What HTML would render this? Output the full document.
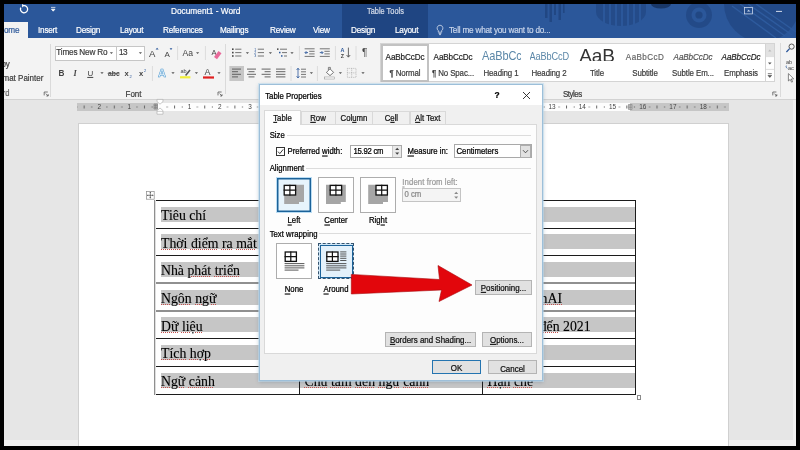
<!DOCTYPE html>
<html><head><meta charset="utf-8">
<style>
*{margin:0;padding:0;box-sizing:border-box}
html,body{width:800px;height:450px;overflow:hidden;background:#000}
body{position:relative;font-family:"Liberation Sans",sans-serif;color:#222}
.a{position:absolute}
.t{position:absolute;white-space:nowrap;line-height:1}
#app{left:4px;top:4px;width:792px;height:442px;background:#e6e6e6;overflow:hidden;will-change:transform}
#title{left:0;top:0;width:792px;height:34px;background:#2b579a;overflow:hidden}
#tt{left:338px;top:0;width:86px;height:34px;background:#1f4582}
.tab{color:#fff;font-size:8.2px;top:22.7px;letter-spacing:-.22px}
#ribbon{left:0;top:34px;width:792px;height:61.5px;background:#f3f3f3;border-bottom:1px solid #d2d2d2}
.rl{font-size:7.6px;color:#3a3a3a}
.sep{position:absolute;width:1px;background:#dadada;top:6px;height:50px}
.sty{position:absolute;top:0;width:48px;height:38px}
.sty .p{position:absolute;left:0;width:48px;text-align:center;top:10.2px;font-size:8.1px;letter-spacing:-.1px;color:#222;line-height:1;white-space:nowrap;overflow:hidden}
.sty .n{position:absolute;left:0;width:48px;text-align:center;top:26.6px;font-size:7.9px;letter-spacing:-.1px;color:#3a3a3a;line-height:1;white-space:nowrap}
#page{left:74.2px;top:118.8px;width:650.4px;height:330px;background:#fff;border:1px solid #d0d0d0;border-bottom:none}
.hl{position:absolute;background:#c6c6c6;height:15px}
.ct{position:absolute;font-family:"Liberation Serif",serif;font-size:13.8px;line-height:1;white-space:nowrap;color:#000;margin-top:1.5px;-webkit-text-stroke:.12px #000}
.ct i{font-style:normal;text-decoration:underline dotted #c4504c 1px;text-underline-offset:1.2px}
#dlg{left:255px;top:80px;width:284px;height:297px;background:#f0f0f0;border:1px solid #9dbfd9;box-shadow:0 0 0 1px rgba(190,220,240,.55),0 1px 4px rgba(40,70,100,.3)}
#dlg .t,.btn,.dtab{-webkit-text-stroke:.22px currentColor}
#dlg .t{font-size:7.75px;color:#000}
.btn{position:absolute;border:1px solid #b4b4b4;background:#e1e1e1;font-size:7.95px;text-align:center;color:#111;white-space:nowrap}
.dtab{position:absolute;top:26px;height:13px;border:1px solid #d9d9d9;border-bottom:none;background:#f0f0f0;font-size:7.75px;text-align:center;line-height:12.4px;color:#111}
.box{position:absolute;width:36px;height:36px;background:#fff;border:1px solid #adadad}
u{text-decoration:underline;text-underline-offset:1px;text-decoration-thickness:.6px}
.hline{position:absolute;height:1px;background:#dcdcdc}
.tab,.rl,.sty .n,.ttl{transform:scaleY(1.1);transform-origin:50% 55%}
#dlg .t{transform:translateY(.2px) scaleY(1.1);transform-origin:50% 55%}
.sty .p{transform:scaleY(1.16);transform-origin:50% 60%}
.tab,.ttl,.sty .p,.sty .n,.rl{-webkit-text-stroke:.18px currentColor}
.s{display:inline-block;transform:translateY(.6px) scaleY(1.1);transform-origin:50% 55%}
</style></head><body>
<div id="app" class="a">
 <div id="title" class="a">
<svg class="a" style="left:0;top:0" width="792" height="34"><g transform="translate(-4,-4)" fill="#20457f" opacity=".85">
   <rect x="545" y="4" width="2.5" height="14"/><rect x="549.5" y="4" width="2.5" height="18"/><rect x="554" y="4" width="2" height="11"/><rect x="558.5" y="4" width="2.5" height="16"/><rect x="563" y="4" width="1.6" height="9"/>
   <path d="M596 4H646V12A25 14 0 0 1 596 12Z" opacity=".7"/>
   <g fill="#2b579a"><rect x="603" y="4" width="2" height="22"/><rect x="609" y="4" width="2" height="24"/><rect x="615" y="4" width="2" height="24"/><rect x="621" y="4" width="2" height="24"/><rect x="627" y="4" width="2" height="24"/><rect x="633" y="4" width="2" height="22"/><rect x="639" y="4" width="2" height="18"/></g>
   <ellipse cx="661" cy="4" rx="10" ry="4.5" fill="#16325f"/><circle cx="699" cy="15" r="13" opacity=".8"/><circle cx="699" cy="15" r="7.5" fill="#2b579a"/><circle cx="699" cy="15" r="3.6"/>
   <circle cx="762" cy="4" r="38" opacity=".8"/>
   <g stroke="#2f5c9f" stroke-width="1.4" fill="none"><path d="M740 4L785 36M748 4L792 35M756 4L796 32M732 6L776 38"/></g>
  </g></svg>
  <svg class="a" style="left:739px;top:2px" width="50" height="12"><rect x="1.5" y="1.5" width="8" height="6.4" fill="none" stroke="#c9d5ea" stroke-width="0.8"/><path d="M4 5.6l1.6-1.8l1.6 1.8z" fill="#c9d5ea"/><path d="M33 5.4h6" stroke="#e4eaf5" stroke-width="0.9"/></svg>
  <svg class="a" style="left:431px;top:20px" width="10" height="12"><path d="M5 1.2a3 3 0 0 1 1.7 5.4v1.6h-3.4v-1.6a3 3 0 0 1 1.7-5.4zM3.6 9.4h2.8M4 10.6h2" stroke="#d5deee" stroke-width="0.8" fill="none"/></svg>
  <svg class="a" style="left:12.6px;top:-.6px" width="50" height="14"><path d="M7 2.6a3.6 3.6 0 1 1-3.2 2" stroke="#fff" stroke-width="1.3" fill="none"/><path d="M5 1l2.6 1.6l-2.4 1.8z" fill="#fff"/><path d="M34 4.4h4.4M34.4 6.2h3.6l-1.8 2z" stroke="#fff" stroke-width="0.7" fill="#fff"/></svg>
  <div id="tt" class="a"></div>
  <div class="t ttl" style="left:167px;top:3px;color:#fff;font-size:8.3px">Document1 - Word</div>
  <div class="t ttl" style="left:363px;top:3.5px;color:#d5dcea;font-size:7.4px">Table Tools</div>
  <div class="a" style="left:0;top:18px;width:24px;height:16px;background:#f3f3f3"></div>
  <div class="t tab" style="left:0;color:#2b579a">ome</div>
  <div class="t tab" style="left:34px">Insert</div>
  <div class="t tab" style="left:72px">Design</div>
  <div class="t tab" style="left:116px">Layout</div>
  <div class="t tab" style="left:159px">References</div>
  <div class="t tab" style="left:216px">Mailings</div>
  <div class="t tab" style="left:266px">Review</div>
  <div class="t tab" style="left:309px">View</div>
  <div class="t tab" style="left:347px">Design</div>
  <div class="t tab" style="left:391px">Layout</div>
  <div class="t tab" style="left:445px;color:#c9d5ea">Tell me what you want to do...</div>
 </div>
 <div id="ribbon" class="a">
  <div class="t rl" style="left:-2.6px;top:22.5px;font-size:8px">py</div>
  <div class="t rl" style="left:-1.5px;top:37px;font-size:8px">mat Painter</div>
  <div class="t rl" style="left:-1.3px;top:52px;color:#666">rd</div>
  <div class="sep" style="left:45.8px;height:53px"></div>
  <div class="a" style="left:50.5px;top:7.5px;width:62px;height:15px;background:#fff;border:1px solid #c6c6c6"></div>
  <div class="a" style="left:112px;top:7.5px;width:29px;height:15px;background:#fff;border:1px solid #c6c6c6"></div>
  <div class="t rl" style="left:52.3px;top:11.3px;font-size:8.2px;letter-spacing:-.2px">Times New Ro</div>
  <div class="t rl" style="left:115px;top:11.3px;font-size:8.2px;letter-spacing:-.6px">13</div>
  <div class="t rl" style="left:121.5px;top:52.8px;font-size:8px">Font</div>
  <div class="sep" style="left:221px"></div>
  <div class="t rl" style="left:559px;top:52.8px;font-size:8px;letter-spacing:-.5px">Styles</div>
  <div class="sep" style="left:776.4px;top:4.5px;height:54px"></div>
  <div class="a" style="left:761.4px;top:4.5px;width:9.6px;height:39px;background:#fff;border:1px solid #d4d4d4"></div>
  <div class="a" style="left:762.4px;top:5.5px;width:7.6px;height:12.6px;background:#e2e2e2"></div>
  <svg class="a" style="left:761.4px;top:4.5px" width="9.6" height="39"><path d="M3.2 8.4l1.6-1.8l1.6 1.8z" fill="#bbb"/><path d="M0 13.6h9.6M0 26.4h9.6" stroke="#d4d4d4" stroke-width="0.8"/><path d="M3 19.6h3.6l-1.8 2z" fill="#555"/><path d="M2.8 30.6h4M3 32.4h3.6l-1.8 2z" fill="#555" stroke="#555" stroke-width="0.7"/></svg>
  <svg class="a" style="left:780px;top:4px" width="12" height="42"><circle cx="7.6" cy="4.6" r="2.6" fill="none" stroke="#555" stroke-width="1"/><path d="M5.6 6.6L2.4 10" stroke="#2b579a" stroke-width="1.3"/><text x="2" y="22" font-size="5.6" font-family="Liberation Sans, sans-serif" fill="#444">ab</text><text x="4" y="28" font-size="5.6" font-family="Liberation Sans, sans-serif" fill="#444">ac</text><path d="M2.4 23.6q-1.4 1.6 1 2.8" stroke="#2b579a" stroke-width="0.7" fill="none"/><path d="M4.4 31.6v7.4l1.8-1.6l1.4 2.8l1-.5l-1.3-2.7l2.4-.2z" fill="#fff" stroke="#555" stroke-width="0.7"/></svg>
  <svg class="a" style="left:0;top:0" width="792" height="61" font-family="Liberation Sans, sans-serif"><g transform="translate(-4,-38)">
   <path d="M109.8 52.2h3.2l-1.6 1.8z" fill="#555"/>
   <path d="M138.8 52.2h3.2l-1.6 1.8z" fill="#555"/>
   <text x="149" y="57" font-size="9.6" fill="#444">A</text><path d="M155.6 49.6l1.5-1.8l1.5 1.8z" fill="#2b579a"/>
   <text x="164.6" y="57" font-size="8" fill="#444">A</text><path d="M169.6 48.2l1.4 1.7l1.4-1.7z" fill="#2b579a"/>
   <path d="M177.6 46V60M205.4 46V60M299.4 46V60M335.4 46V60M356 46V60M152.4 66V81M291 66V81M317.4 66V81" stroke="#dcdcdc" stroke-width="1" fill="none"/>
   <text x="182.6" y="56" font-size="8.6" fill="#444">Aa</text><path d="M196.0 52.2h3.2l-1.6 1.8z" fill="#555"/>
   <text x="211.4" y="55" font-size="7.5" fill="#444">A</text><path d="M214 57l4.5-6l3 2.2l-4.5 6z" fill="#e86a9a"/>
   <rect x="232" y="48.4" width="1.6" height="1.6" fill="#444"/><path d="M235.2 49.2H241.4" stroke="#666" stroke-width="0.9"/><rect x="232" y="51.8" width="1.6" height="1.6" fill="#444"/><path d="M235.2 52.6H241.4" stroke="#666" stroke-width="0.9"/><rect x="232" y="55.2" width="1.6" height="1.6" fill="#444"/><path d="M235.2 56.0H241.4" stroke="#666" stroke-width="0.9"/><path d="M245.8 52.2h3.2l-1.6 1.8z" fill="#555"/>
   <text x="254.2" y="50.5" font-size="3.6" fill="#2b579a">1</text><path d="M257.8 49.2H264.0" stroke="#666" stroke-width="0.9"/><text x="254.2" y="53.9" font-size="3.6" fill="#2b579a">2</text><path d="M257.8 52.6H264.0" stroke="#666" stroke-width="0.9"/><text x="254.2" y="57.3" font-size="3.6" fill="#2b579a">3</text><path d="M257.8 56.0H264.0" stroke="#666" stroke-width="0.9"/><path d="M268.8 52.2h3.2l-1.6 1.8z" fill="#555"/>
   <path d="M280 49.2H287M282 52.6H287M284 56H287" stroke="#666" stroke-width="0.9"/><rect x="277" y="48.4" width="1.5" height="1.5" fill="#444"/><rect x="279" y="51.8" width="1.5" height="1.5" fill="#2b579a"/><rect x="281" y="55.2" width="1.5" height="1.5" fill="#2b579a"/><path d="M290.4 52.2h3.2l-1.6 1.8z" fill="#555"/>
   <path d="M304.6 48.800000000000004H314.6M309.20000000000005 51.300000000000004H314.6M309.20000000000005 53.9H314.6M304.6 56.4H314.6" stroke="#666" stroke-width="0.9"/><path d="M308.0 52.6H305.20000000000005M306.40000000000003 51.2L305.0 52.6L306.40000000000003 54.0" stroke="#2b579a" stroke-width="0.9" fill="none"/><path d="M319.8 48.800000000000004H329.8M324.40000000000003 51.300000000000004H329.8M324.40000000000003 53.9H329.8M319.8 56.4H329.8" stroke="#666" stroke-width="0.9"/><path d="M319.8 52.6H322.8M321.6 51.2L323.0 52.6L321.6 54.0" stroke="#2b579a" stroke-width="0.9" fill="none"/>
   <text x="340.6" y="52" font-size="5.4" fill="#2b579a" font-weight="bold">A</text><text x="340.8" y="57.6" font-size="5.4" fill="#444" font-weight="bold">Z</text><path d="M348.4 47.6V57M346.6 55l1.8 2.2l1.8-2.2" stroke="#555" stroke-width="0.9" fill="none"/>
   <text x="362" y="56.4" font-size="10" fill="#444">¶</text>
   <text x="58.6" y="76" font-size="8.2" font-weight="bold" fill="#444">B</text>
   <text x="73.4" y="76" font-size="8.2" font-style="italic" font-weight="bold" font-family="Liberation Serif, serif" fill="#444">I</text>
   <text x="87.4" y="76" font-size="8" fill="#444" text-decoration="underline">U</text><path d="M87.4 77.4H93.2" stroke="#444" stroke-width="0.7"/><path d="M100.4 72.2h3.2l-1.6 1.8z" fill="#555"/>
   <text x="108" y="75.6" font-size="6.8" font-weight="bold" fill="#444">abc</text><path d="M107.6 73.4H119.4" stroke="#444" stroke-width="0.6"/>
   <text x="124.4" y="76" font-size="7.6" font-weight="bold" fill="#444">x</text><text x="129.4" y="77.6" font-size="4" fill="#2b579a">2</text>
   <text x="139" y="76" font-size="7.6" font-weight="bold" fill="#444">x</text><text x="144" y="72" font-size="4" fill="#2b579a">2</text>
   <text x="158" y="77" font-size="11" font-weight="bold" fill="#eef6fc" stroke="#4a98d0" stroke-width="0.55">A</text><path d="M171.4 72.2h3.2l-1.6 1.8z" fill="#555"/>
   <text x="180.4" y="72.6" font-size="5.6" fill="#444">ab</text><path d="M185 75l4.4-5.6l1.2 1l-4.4 5.6z" fill="#555"/><rect x="180" y="76.2" width="10.4" height="2.2" fill="#f2ee3a"/><path d="M194.8 72.2h3.2l-1.6 1.8z" fill="#555"/>
   <text x="204.6" y="75.4" font-size="9" fill="#444">A</text><rect x="203" y="76.4" width="11" height="2.2" fill="#e02020"/><path d="M217.4 72.2h3.2l-1.6 1.8z" fill="#555"/>
   <rect x="229.4" y="66" width="14.6" height="15" fill="#c6c6c6"/>
   <path d="M232.0 69.1h9M232.0 71.7h6M232.0 74.3h9M232.0 76.9h6" stroke="#555" stroke-width="0.9" fill="none"/><path d="M247.0 69.1h9M248.5 71.7h6M247.0 74.3h9M248.5 76.9h6" stroke="#555" stroke-width="0.9" fill="none"/><path d="M261.6 69.1h9M264.6 71.7h6M261.6 74.3h9M264.6 76.9h6" stroke="#555" stroke-width="0.9" fill="none"/><path d="M276.0 69.1h9.4M276.0 71.7h9.4M276.0 74.3h9.4M276.0 76.9h9.4" stroke="#555" stroke-width="0.9" fill="none"/>
   <path d="M301 69.2H306M301 71.8H306M301 74.4H306M301 77H306" stroke="#666" stroke-width="0.9"/><path d="M298 68.4V77.8M296.6 70l1.4-1.8l1.4 1.8M296.6 76.2l1.4 1.8l1.4-1.8" stroke="#2b579a" stroke-width="0.8" fill="none"/><path d="M309.8 72.2h3.2l-1.6 1.8z" fill="#555"/>
   <path d="M326.4 72.4l3.6-3.6l3.6 3.6l-3.6 3.2z" fill="#fff" stroke="#555" stroke-width="0.8"/><path d="M328.4 70V67.4h2V69" stroke="#555" stroke-width="0.7" fill="none"/><rect x="324.4" y="77" width="10.2" height="2" fill="#fff" stroke="#888" stroke-width="0.5"/><path d="M338.8 72.2h3.2l-1.6 1.8z" fill="#555"/>
   <path d="M347.4 68.4h8.6v9h-8.6zM351.7 68.4v9M347.4 72.9h8.6" stroke="#aaa" stroke-width="0.7" fill="none" stroke-dasharray="1 0.8"/><path d="M361.4 72.2h3.2l-1.6 1.8z" fill="#555"/>
   <path d="M44.2 95.4V92.0H47.8" stroke="#555" stroke-width="0.8" fill="none"/><path d="M45.8 93.6L48.2 96.0M48.2 94.2V96.0H46.4" stroke="#555" stroke-width="0.8" fill="none"/><path d="M218.0 95.4V92.0H221.6" stroke="#555" stroke-width="0.8" fill="none"/><path d="M219.6 93.6L222.0 96.0M222.0 94.2V96.0H220.2" stroke="#555" stroke-width="0.8" fill="none"/><path d="M772.8 95.4V92.0H776.4" stroke="#555" stroke-width="0.8" fill="none"/><path d="M774.4 93.6L776.8 96.0M776.8 94.2V96.0H775.0" stroke="#555" stroke-width="0.8" fill="none"/>
  </g></svg>
  <div class="a" id="gal" style="left:376px;top:4.5px;width:386px;height:39px;background:#fff;border:1px solid #d4d4d4">
   <div class="sty" style="left:0;border:2px solid #c2c2c2"><div class="p" style="left:-2px;top:8.2px">AaBbCcDc</div><div class="n" style="left:-2px;top:24.6px">¶ Normal</div></div>
   <div class="sty" style="left:48px"><div class="p">AaBbCcDc</div><div class="n">¶ No Spac...</div></div>
   <div class="sty" style="left:96px"><div class="p" style="font-size:11px;top:7.6px;color:#5b87a8;-webkit-text-stroke:0;text-align:left;left:5px;width:39px">AaBbCc</div><div class="n">Heading 1</div></div>
   <div class="sty" style="left:144px"><div class="p" style="font-size:9.2px;top:9.2px;color:#5b87a8;-webkit-text-stroke:0;text-align:left;left:4.5px;width:40px">AaBbCcD</div><div class="n">Heading 2</div></div>
   <div class="sty" style="left:192px"><div class="p" style="font-size:19px;top:2.3px;height:15.5px;transform:none;-webkit-text-stroke:0;color:#333">AaB</div><div class="n">Title</div></div>
   <div class="sty" style="left:240px"><div class="p" style="color:#666;letter-spacing:.4px">AaBbCcD</div><div class="n">Subtitle</div></div>
   <div class="sty" style="left:288px"><div class="p" style="font-style:italic;color:#555">AaBbCcDc</div><div class="n">Subtle Em...</div></div>
   <div class="sty" style="left:336px"><div class="p" style="font-style:italic">AaBbCcDc</div><div class="n">Emphasis</div></div>
  </div>
 </div>
 <div class="a" style="left:789px;top:96px;width:3px;height:346px;background:#f1f1f1"></div>
 <div class="a" style="left:0;top:436.4px;width:792px;height:6px;background:#f1f1f1"></div>
 <div id="page" class="a"></div>

 <!-- ruler -->
 <div class="a" id="ruler" style="left:73px;top:99px;width:652px;height:7.8px;background:#fdfdfd;overflow:hidden">
  <div class="a" style="left:0;top:0;width:80.5px;height:8px;background:#c6c6c6"></div>
  <div class="a" style="left:552.5px;top:0;width:100px;height:8px;background:#c6c6c6"></div>
  <svg class="a" style="left:0;top:0" width="652" height="8"><defs><pattern id="tk" x="82.5" y="0" width="30.15" height="8" patternUnits="userSpaceOnUse"><rect x="7.2" y="3.5" width="1" height="1" fill="#555"/><rect x="14.6" y="2.5" width="1" height="3" fill="#666"/><rect x="22.2" y="3.5" width="1" height="1" fill="#555"/></pattern></defs><rect width="652" height="8" fill="url(#tk)"/>
  <g font-family="Liberation Sans, sans-serif" font-size="6.4" fill="#444" text-anchor="middle"><text x="22.2" y="6.3">2</text><text x="52.3" y="6.3">1</text><text x="112.6" y="6.3">1</text><text x="142.8" y="6.3">2</text><text x="173" y="6.3">3</text><text x="475" y="6.3">13</text><text x="505.3" y="6.3">14</text><text x="535.5" y="6.3">15</text><text x="565.8" y="6.3">16</text><text x="595.9" y="6.3">17</text><text x="626.2" y="6.3">18</text></g></svg>
 </div>

 <svg class="a" style="left:146px;top:94px" width="20" height="20"><path d="M7 1.4h6v2.2l-3 2.6l-3-2.6z" fill="#fff" stroke="#b0b0b0" stroke-width="0.7"/><path d="M7 16.2v-3.6l3-2.6l3 2.6v3.6z" fill="#fff" stroke="#b0b0b0" stroke-width="0.7"/><path d="M7 13.4h6" stroke="#b0b0b0" stroke-width="0.6"/><path d="M4 6h3.4v5H4zM4 7.6h3.4M4 9.3h3.4M5.7 6v5" stroke="#777" stroke-width="0.6" fill="#bbb"/></svg>
 <svg class="a" style="left:624px;top:100px" width="6" height="6"><path d="M.4 .4h3.6v5H.4zM.4 2h3.6M.4 3.7h3.6M2.2 .4v5" stroke="#777" stroke-width="0.6" fill="#ddd"/></svg>
 <svg class="a" style="left:142px;top:187.4px" width="9" height="9"><rect x=".4" y=".4" width="7.8" height="7.8" fill="#fff" stroke="#8a8a8a" stroke-width="0.7"/><path d="M4.3 1.6v5.4M1.6 4.3h5.4" stroke="#333" stroke-width="0.6"/><path d="M4.3 1l.9 1.1h-1.8zM4.3 7.6l.9-1.1h-1.8zM1 4.3l1.1-.9v1.8zM7.6 4.3l-1.1-.9v1.8z" fill="#333"/></svg>
 <div class="a" style="left:632.6px;top:391.4px;width:4.6px;height:4.6px;background:#fff;border:.8px solid #8a8a8a"></div>
 <div id="tbl" class="a" style="left:150.5px;top:196.3px;width:482px;height:195px">
  <div class="hl" style="left:6px;top:6.4px;width:475px"></div>
  <div class="ct" style="left:6.5px;top:7.2px">Tiêu chí</div>
  <div class="hl" style="left:6px;top:34.1px;width:475px"></div>
  <div class="ct" style="left:6.5px;top:34.9px"><i>Thời</i> <i>điểm</i> <i>ra</i> <i>mắt</i></div>
  <div class="hl" style="left:6px;top:61.8px;width:475px"></div>
  <div class="ct" style="left:6.5px;top:62.6px">Nhà <i>phát</i> <i>triển</i></div>
  <div class="hl" style="left:6px;top:89.5px;width:475px"></div>
  <div class="ct" style="left:6.5px;top:90.3px"><i>Ngôn</i> <i>ngữ</i></div>
  <div class="ct" style="right:74.5px;top:90.3px"><i>OpenAI</i></div>
  <div class="hl" style="left:6px;top:117.2px;width:475px"></div>
  <div class="ct" style="left:6.5px;top:118.0px"><i>Dữ</i> <i>liệu</i></div>
  <div class="ct" style="right:45.9px;top:118.0px">Dữ liệu <i>đến</i> 2021</div>
  <div class="hl" style="left:6px;top:144.9px;width:475px"></div>
  <div class="ct" style="left:6.5px;top:145.7px"><i>Tích</i> <i>hợp</i></div>
  <div class="hl" style="left:6px;top:172.6px;width:475px"></div>
  <div class="ct" style="left:6.5px;top:173.4px"><i>Ngữ</i> <i>cảnh</i></div>
  <div class="ct" style="left:150px;top:173.4px"><i>Chú</i> <i>tâm</i> <i>đến</i> <i>ngữ</i> <i>cảnh</i></div>
  <div class="ct" style="left:333px;top:173.4px"><i>Hạn</i> <i>chế</i></div>
  <div class="a" style="left:0;top:-0.3px;width:481.6px;height:1px;background:#1c1c1c"></div>
  <div class="a" style="left:0;top:27.7px;width:481.6px;height:1px;background:#1c1c1c"></div>
  <div class="a" style="left:0;top:54.7px;width:481.6px;height:1px;background:#1c1c1c"></div>
  <div class="a" style="left:0;top:81.7px;width:481.6px;height:2px;background:#909090"></div>
  <div class="a" style="left:0;top:109.7px;width:481.6px;height:2px;background:#909090"></div>
  <div class="a" style="left:0;top:137.7px;width:481.6px;height:1px;background:#1c1c1c"></div>
  <div class="a" style="left:0;top:165.7px;width:481.6px;height:1px;background:#1c1c1c"></div>
  <div class="a" style="left:0;top:193.7px;width:481.6px;height:1px;background:#1c1c1c"></div>
  <div class="a" style="left:-.4px;top:0;width:2px;height:194.8px;background:linear-gradient(90deg,#8f8f8f 1px,#dedede 1px)"></div>
  <div class="a" style="left:144.5px;top:0;width:1.2px;height:194.8px;background:#1c1c1c"></div>
  <div class="a" style="left:327.6px;top:0;width:1.2px;height:194.8px;background:#1c1c1c"></div>
  <div class="a" style="left:480.6px;top:0;width:1.2px;height:194.8px;background:#1c1c1c"></div>
 </div>

 <div id="dlg" class="a">
  <div class="a" style="left:0;top:0;width:282px;height:20px;background:#fff"></div>
  <div class="t" style="left:5.2px;top:7.9px;font-size:7.8px;color:#000">Table Properties</div>
  <div class="t" style="left:234.4px;top:5.8px;font-size:8.4px;color:#000;font-weight:bold">?</div>
  <svg class="a" style="left:261.5px;top:6px" width="9" height="9"><path d="M1 1L8 8M8 1L1 8" stroke="#222" stroke-width="0.9" fill="none"/></svg>
  <div class="a" style="left:4px;top:39px;width:273px;height:230px;background:#fdfdfd;border:1px solid #d9d9d9"></div>
  <div class="dtab" style="left:4px;width:37px;top:25px;height:15px;background:#fdfdfd;line-height:14px"><span class="s"><u>T</u>able</span></div>
  <div class="dtab" style="left:40.5px;width:35px"><span class="s"><u>R</u>ow</span></div>
  <div class="dtab" style="left:75px;width:37.8px"><span class="s">Col<u>u</u>mn</span></div>
  <div class="dtab" style="left:112.3px;width:38.2px"><span class="s">C<u>e</u>ll</span></div>
  <div class="dtab" style="left:150px;width:35.5px"><span class="s"><u>A</u>lt Text</span></div>

  <div class="t" style="left:9.7px;top:47.2px">Size</div>
  <div class="hline" style="left:27px;top:49.5px;width:244px"></div>
  <div class="a" style="left:16px;top:61.5px;width:9px;height:9px;border:1px solid #333;background:#fff"></div>
  <svg class="a" style="left:16px;top:61.5px" width="9" height="9"><path d="M2 4.6L3.8 6.6L7.2 2.4" stroke="#222" stroke-width="0.9" fill="none"/></svg>
  <div class="t" style="left:27.6px;top:62.5px">Preferred <u>w</u>idth:</div>
  <div class="a" style="left:90.4px;top:60px;width:51.6px;height:13px;border:1px solid #a9a9a9;background:#fff"></div>
  <div class="t" style="left:93.4px;top:62.7px;letter-spacing:-.25px">15.92 cm</div>
  <div class="a" style="left:132px;top:61px;width:9px;height:11px;background:#e9e9e9;border-left:1px solid #c8c8c8"></div>
  <svg class="a" style="left:132.6px;top:61.2px" width="8" height="10.6"><path d="M2.2 4L4.2 1.8L6.2 4Z M2.2 6.6L4.2 8.8L6.2 6.6Z" fill="#444"/></svg>
  <div class="t" style="left:147.5px;top:62.7px"><u>M</u>easure in:</div>
  <div class="a" style="left:193.5px;top:59.4px;width:78px;height:14px;border:1px solid #a9a9a9;background:#fff"></div>
  <div class="t" style="left:196.5px;top:62.9px">Centimeters</div>
  <div class="a" style="left:260px;top:60px;width:11px;height:13px;background:#e1e1e1;border:1px solid #adadad"></div>
  <svg class="a" style="left:260px;top:60px" width="11" height="13"><path d="M3 5.2L5.5 7.8L8 5.2" stroke="#333" stroke-width="0.8" fill="none"/></svg>

  <div class="t" style="left:9.7px;top:79.8px">Alignment</div>
  <div class="hline" style="left:46px;top:82.5px;width:225px"></div>
  <div class="box" style="left:16px;top:92px;border:1.5px solid #b9dcf3;box-shadow:inset 0 0 0 1.5px #1b6299;background:#e7f4fc"></div>
  <div class="box" style="left:58px;top:92px"></div>
  <div class="box" style="left:100px;top:92px"></div>
  <div class="t" style="left:16px;width:36px;text-align:center;top:132.2px"><u>L</u>eft</div>
  <div class="t" style="left:58px;width:36px;text-align:center;top:132.2px"><u>C</u>enter</div>
  <div class="t" style="left:100px;width:36px;text-align:center;top:132.2px">Rig<u>h</u>t</div>
  <div class="t" style="left:142.3px;top:93.7px;color:#9a9a9a;letter-spacing:.1px"><u>I</u>ndent from left:</div>
  <div class="a" style="left:142px;top:103px;width:59px;height:13.6px;border:1px solid #c4c4c4;background:#f4f4f4"></div>
  <div class="t" style="left:144.5px;top:106px;color:#8a8a8a">0 cm</div>
  <svg class="a" style="left:192px;top:104.5px" width="8" height="10.6"><path d="M2.2 4L4.2 1.8L6.2 4Z M2.2 6.6L4.2 8.8L6.2 6.6Z" fill="#888"/></svg>

  <div class="t" style="left:9.7px;top:146.1px">Text wrapping</div>
  <div class="hline" style="left:59px;top:147.5px;width:212px"></div>
  <div class="box" style="left:16px;top:158px"></div>
  <div class="box" style="left:58px;top:158px;border:1.3px dashed #35536e;background:#cfe6f6"></div>
  <div class="a" style="left:59.5px;top:159.5px;width:33px;height:33px;border:1.6px solid #1b6299;background:#e3f1fb"></div>
  <div class="t" style="left:16px;width:36px;text-align:center;top:200.9px"><u>N</u>one</div>
  <div class="t" style="left:58px;width:36px;text-align:center;top:200.9px"><u>A</u>round</div>

  <svg class="a" style="left:16px;top:92px" width="36" height="36"><path d="M8.2 7.8h19.8v17.2h-5v2h-14.8z" fill="#a6a6a6"/><rect x="8.2" y="8.4" width="11.4" height="9.6" fill="#fff" stroke="#111" stroke-width="1.3"/><path d="M13.9 7.8V18.6M7.6 13.2H20.2" stroke="#111" stroke-width="1.2" fill="none"/></svg>
  <svg class="a" style="left:58px;top:92px" width="36" height="36"><path d="M8 7.8h19.8v17.2h-5v2h-14.8z" fill="#a6a6a6"/><rect x="12.2" y="8.4" width="11.4" height="9.6" fill="#fff" stroke="#111" stroke-width="1.3"/><path d="M17.9 7.8V18.6M11.6 13.2H24.2" stroke="#111" stroke-width="1.2" fill="none"/></svg>
  <svg class="a" style="left:100px;top:92px" width="36" height="36"><path d="M8.2 7.8h19.8v17.2h-5v2h-14.8z" fill="#a6a6a6"/><rect x="16.0" y="8.4" width="11.4" height="9.6" fill="#fff" stroke="#111" stroke-width="1.3"/><path d="M21.7 7.8V18.6M15.4 13.2H28.0" stroke="#111" stroke-width="1.2" fill="none"/></svg>
  <svg class="a" style="left:16px;top:158px" width="36" height="36"><rect x="9.2" y="9.0" width="11.2" height="9.4" fill="#fff" stroke="#111" stroke-width="1.3"/><path d="M14.8 8.4V19.0M8.6 13.7H21.0" stroke="#111" stroke-width="1.2" fill="none"/><path d="M8.6 20.6H28.4M8.6 22.8H28.4M8.6 24.9H28.4M8.6 27.1H22.5" stroke="#444" stroke-width="0.9" fill="none"/></svg>
  <svg class="a" style="left:58px;top:158px" width="36" height="36"><rect x="8.8" y="9.0" width="11.2" height="9.4" fill="#fff" stroke="#111" stroke-width="1.3"/><path d="M14.4 8.4V19.0M8.2 13.7H20.6" stroke="#111" stroke-width="1.2" fill="none"/><path d="M22.2 8.9H28.4M22.2 11H28.4M22.2 13.1H28.4M22.2 15.3H28.4M22.2 17.5H28.4M8.2 20.6H28.4M8.2 22.8H28.4M8.2 24.9H28.4M8.2 27.1H22.2" stroke="#444" stroke-width="0.9" fill="none"/></svg>
  <div class="btn" style="left:215px;top:195px;width:57px;height:15px;line-height:14px"><span class="s"><u>P</u>ositioning...</span></div>
  <div class="btn" style="left:125px;top:247.4px;width:91px;height:14.6px;line-height:14.2px"><span class="s"><u>B</u>orders and Shading...</span></div>
  <div class="btn" style="left:222px;top:247.4px;width:50px;height:14.6px;line-height:14.2px"><span class="s"><u>O</u>ptions...</span></div>
  <div class="btn" style="left:172px;top:275px;width:49px;height:14.4px;line-height:14.6px;border:1.5px solid #2474b0"><span class="s">OK</span></div>
  <div class="btn" style="left:228px;top:275px;width:49px;height:14.4px;line-height:15.4px"><span class="s">Cancel</span></div>
  <svg class="a" style="left:85px;top:176px;overflow:visible" width="130" height="45"><polygon points="6.3,13.4 94.5,18.5 93,4.5 127,24 94,40.5 96.5,29 6.3,33" fill="#e2060c" stroke="#a8080c" stroke-width=".6" stroke-linejoin="miter"/></svg>
 </div>
</div>
</body></html>
